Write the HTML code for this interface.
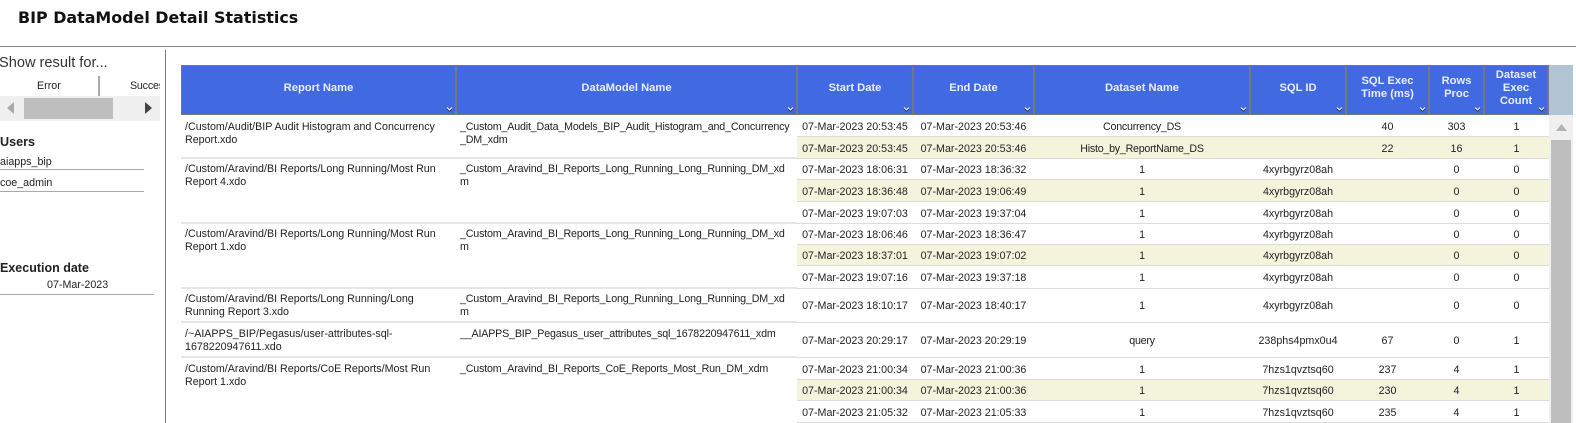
<!DOCTYPE html>
<html><head><meta charset="utf-8">
<style>
html,body{margin:0;padding:0;background:#fff}
body{width:1576px;height:423px;position:relative;overflow:hidden;font-family:"Liberation Sans",sans-serif;font-size:10.7px;color:#222}
div{position:absolute;box-sizing:border-box}
.t{white-space:nowrap}
.h{background:#4169e1;top:65px;height:50px;border:1px solid #777;border-right-width:2px;color:#e8edff;font-weight:bold;font-size:11.2px;line-height:13px;display:flex;align-items:center;justify-content:center;text-align:center;padding-bottom:4px}
.h svg{position:absolute;right:2px;bottom:2px;width:7px;height:5px}
.r{left:797px;width:752px;border-bottom:1.5px solid #dcdcdc}
.a{background:#f4f4dd}
.c{top:0;bottom:0;padding-top:3px;display:flex;align-items:center;justify-content:center;white-space:nowrap}
.c0{left:0;width:116px}.c1{left:116px;width:121px}.c2{left:237px;width:216px;letter-spacing:-.25px}.c3{left:453px;width:96px}.c4{left:549px;width:83px}.c5{left:632px;width:55px}.c6{left:687px;width:65px}
.l{white-space:nowrap;line-height:13px;color:#222}
.d{letter-spacing:-.18px}
.s{height:2px;background:#e6e6e6;left:181px;width:616px}
</style></head><body>
<div class="t" style="left:18px;top:8px;font:bold 15.9px/20px 'DejaVu Sans',sans-serif;color:#111">BIP DataModel Detail Statistics</div>
<div style="left:0;top:46px;width:1576px;height:1px;background:#888"></div>
<div style="left:165px;top:50px;width:1px;height:373px;background:#777"></div>

<div class="t" style="left:-1px;top:54px;font-size:14.6px;line-height:18px;color:#333">Show result for...</div>
<div class="t" style="left:37px;top:80px;line-height:13px">Error</div>
<div style="left:98px;top:76px;width:2px;height:20px;background:#aaa"></div>
<div class="t" style="left:130px;top:80px;width:30px;overflow:hidden;line-height:13px;letter-spacing:-.2px">Success</div>
<div style="left:0;top:96px;width:160px;height:25px;background:#f0f0f0"></div>
<div style="left:24px;top:98px;width:89px;height:21px;background:#bebebe"></div>
<svg style="position:absolute;left:7px;top:102px" width="8" height="12"><path d="M7 0V12L0 6Z" fill="#aaa"/></svg>
<svg style="position:absolute;left:145px;top:102px" width="8" height="12"><path d="M0 0V12L7 6Z" fill="#444"/></svg>
<div class="t" style="left:0;top:135px;font-weight:bold;font-size:12.6px;line-height:15px;color:#222">Users</div>
<div class="t" style="left:0;top:156px;line-height:13px">aiapps_bip</div>
<div style="left:0;top:169px;width:144px;height:1px;background:#aaa"></div>
<div class="t" style="left:0;top:177px;line-height:13px">coe_admin</div>
<div style="left:0;top:191px;width:144px;height:1px;background:#aaa"></div>
<div class="t" style="left:0;top:261px;font-weight:bold;font-size:12.5px;line-height:15px;color:#222">Execution date</div>
<div class="t" style="left:47px;top:279px;line-height:13px">07-Mar-2023</div>
<div style="left:0;top:294px;width:154px;height:1px;background:#aaa"></div>

<div class="h" style="left:181px;width:276px">Report Name<svg viewBox="0 0 7 5"><path d="M1 1.500L3.500 4L6 1.500" fill="none" stroke="#1a2550" stroke-width="1.300"/><path d="M1 .5L3.500 3L6 .5" fill="none" stroke="#fff" stroke-width="1.100"/></svg></div>
<div class="h" style="left:456px;width:342px">DataModel Name<svg viewBox="0 0 7 5"><path d="M1 1.500L3.500 4L6 1.500" fill="none" stroke="#1a2550" stroke-width="1.300"/><path d="M1 .5L3.500 3L6 .5" fill="none" stroke="#fff" stroke-width="1.100"/></svg></div>
<div class="h" style="left:797px;width:117px">Start Date<svg viewBox="0 0 7 5"><path d="M1 1.500L3.500 4L6 1.500" fill="none" stroke="#1a2550" stroke-width="1.300"/><path d="M1 .5L3.500 3L6 .5" fill="none" stroke="#fff" stroke-width="1.100"/></svg></div>
<div class="h" style="left:913px;width:122px">End Date<svg viewBox="0 0 7 5"><path d="M1 1.500L3.500 4L6 1.500" fill="none" stroke="#1a2550" stroke-width="1.300"/><path d="M1 .5L3.500 3L6 .5" fill="none" stroke="#fff" stroke-width="1.100"/></svg></div>
<div class="h" style="left:1034px;width:217px">Dataset Name<svg viewBox="0 0 7 5"><path d="M1 1.500L3.500 4L6 1.500" fill="none" stroke="#1a2550" stroke-width="1.300"/><path d="M1 .5L3.500 3L6 .5" fill="none" stroke="#fff" stroke-width="1.100"/></svg></div>
<div class="h" style="left:1250px;width:97px">SQL ID<svg viewBox="0 0 7 5"><path d="M1 1.500L3.500 4L6 1.500" fill="none" stroke="#1a2550" stroke-width="1.300"/><path d="M1 .5L3.500 3L6 .5" fill="none" stroke="#fff" stroke-width="1.100"/></svg></div>
<div class="h" style="left:1346px;width:84px">SQL Exec<br>Time (ms)<svg viewBox="0 0 7 5"><path d="M1 1.500L3.500 4L6 1.500" fill="none" stroke="#1a2550" stroke-width="1.300"/><path d="M1 .5L3.500 3L6 .5" fill="none" stroke="#fff" stroke-width="1.100"/></svg></div>
<div class="h" style="left:1429px;width:56px">Rows<br>Proc<svg viewBox="0 0 7 5"><path d="M1 1.500L3.500 4L6 1.500" fill="none" stroke="#1a2550" stroke-width="1.300"/><path d="M1 .5L3.500 3L6 .5" fill="none" stroke="#fff" stroke-width="1.100"/></svg></div>
<div class="h" style="left:1484px;width:65px">Dataset<br>Exec<br>Count<svg viewBox="0 0 7 5"><path d="M1 1.500L3.500 4L6 1.500" fill="none" stroke="#1a2550" stroke-width="1.300"/><path d="M1 .5L3.500 3L6 .5" fill="none" stroke="#fff" stroke-width="1.100"/></svg></div>

<div style="left:1549px;top:65px;width:24px;height:50px;background:#b0c4d4"></div>
<div style="left:1549px;top:115px;width:24px;height:308px;background:#f0f0f0"></div>
<div style="left:1551px;top:140px;width:20px;height:283px;background:#bebebe"></div>
<svg style="position:absolute;left:1556px;top:124px" width="12" height="8"><path d="M0 7H11L5.500 0Z" fill="#b4b4b4"/></svg>

<div class="s" style="top:157px"></div><div class="s" style="top:222px"></div><div class="s" style="top:287px"></div><div class="s" style="top:321px"></div><div class="s" style="top:356px"></div>

<div class="l" style="left:185px;top:121px">/Custom/Audit/BIP Audit Histogram and Concurrency<br>Report.xdo</div>
<div class="l d" style="left:460px;top:121px">_Custom_Audit_Data_Models_BIP_Audit_Histogram_and_Concurrency<br>_DM_xdm</div>
<div class="l" style="left:185px;top:163px">/Custom/Aravind/BI Reports/Long Running/Most Run<br>Report 4.xdo</div>
<div class="l d" style="left:460px;top:163px">_Custom_Aravind_BI_Reports_Long_Running_Long_Running_DM_xd<br>m</div>
<div class="l" style="left:185px;top:228px">/Custom/Aravind/BI Reports/Long Running/Most Run<br>Report 1.xdo</div>
<div class="l d" style="left:460px;top:228px">_Custom_Aravind_BI_Reports_Long_Running_Long_Running_DM_xd<br>m</div>
<div class="l" style="left:185px;top:293px">/Custom/Aravind/BI Reports/Long Running/Long<br>Running Report 3.xdo</div>
<div class="l d" style="left:460px;top:293px">_Custom_Aravind_BI_Reports_Long_Running_Long_Running_DM_xd<br>m</div>
<div class="l" style="left:185px;top:328px">/~AIAPPS_BIP/Pegasus/user-attributes-sql-<br>1678220947611.xdo</div>
<div class="l d" style="left:460px;top:328px">__AIAPPS_BIP_Pegasus_user_attributes_sql_1678220947611_xdm</div>
<div class="l" style="left:185px;top:363px">/Custom/Aravind/BI Reports/CoE Reports/Most Run<br>Report 1.xdo</div>
<div class="l d" style="left:460px;top:363px">_Custom_Aravind_BI_Reports_CoE_Reports_Most_Run_DM_xdm</div>

<div class="r" style="top:115px;height:22px"><div class="c c0">07-Mar-2023 20:53:45</div><div class="c c1">07-Mar-2023 20:53:46</div><div class="c c2">Concurrency_DS</div><div class="c c4">40</div><div class="c c5">303</div><div class="c c6">1</div></div>
<div class="r a" style="top:137px;height:21.500px"><div class="c c0">07-Mar-2023 20:53:45</div><div class="c c1">07-Mar-2023 20:53:46</div><div class="c c2">Histo_by_ReportName_DS</div><div class="c c4">22</div><div class="c c5">16</div><div class="c c6">1</div></div>
<div class="r" style="top:158.500px;height:21.500px"><div class="c c0">07-Mar-2023 18:06:31</div><div class="c c1">07-Mar-2023 18:36:32</div><div class="c c2">1</div><div class="c c3">4xyrbgyrz08ah</div><div class="c c5">0</div><div class="c c6">0</div></div>
<div class="r a" style="top:180px;height:21.500px"><div class="c c0">07-Mar-2023 18:36:48</div><div class="c c1">07-Mar-2023 19:06:49</div><div class="c c2">1</div><div class="c c3">4xyrbgyrz08ah</div><div class="c c5">0</div><div class="c c6">0</div></div>
<div class="r" style="top:201.500px;height:22px"><div class="c c0">07-Mar-2023 19:07:03</div><div class="c c1">07-Mar-2023 19:37:04</div><div class="c c2">1</div><div class="c c3">4xyrbgyrz08ah</div><div class="c c5">0</div><div class="c c6">0</div></div>
<div class="r" style="top:223px;height:21.500px"><div class="c c0">07-Mar-2023 18:06:46</div><div class="c c1">07-Mar-2023 18:36:47</div><div class="c c2">1</div><div class="c c3">4xyrbgyrz08ah</div><div class="c c5">0</div><div class="c c6">0</div></div>
<div class="r a" style="top:244.500px;height:21.500px"><div class="c c0">07-Mar-2023 18:37:01</div><div class="c c1">07-Mar-2023 19:07:02</div><div class="c c2">1</div><div class="c c3">4xyrbgyrz08ah</div><div class="c c5">0</div><div class="c c6">0</div></div>
<div class="r" style="top:266px;height:22.500px"><div class="c c0">07-Mar-2023 19:07:16</div><div class="c c1">07-Mar-2023 19:37:18</div><div class="c c2">1</div><div class="c c3">4xyrbgyrz08ah</div><div class="c c5">0</div><div class="c c6">0</div></div>
<div class="r" style="top:288px;height:34.500px"><div class="c c0">07-Mar-2023 18:10:17</div><div class="c c1">07-Mar-2023 18:40:17</div><div class="c c2">1</div><div class="c c3">4xyrbgyrz08ah</div><div class="c c5">0</div><div class="c c6">0</div></div>
<div class="r" style="top:322.500px;height:35px"><div class="c c0">07-Mar-2023 20:29:17</div><div class="c c1">07-Mar-2023 20:29:19</div><div class="c c2">query</div><div class="c c3">238phs4pmx0u4</div><div class="c c4">67</div><div class="c c5">0</div><div class="c c6">1</div></div>
<div class="r" style="top:357.500px;height:22px"><div class="c c0">07-Mar-2023 21:00:34</div><div class="c c1">07-Mar-2023 21:00:36</div><div class="c c2">1</div><div class="c c3">7hzs1qvztsq60</div><div class="c c4">237</div><div class="c c5">4</div><div class="c c6">1</div></div>
<div class="r a" style="top:379.500px;height:21.500px"><div class="c c0">07-Mar-2023 21:00:34</div><div class="c c1">07-Mar-2023 21:00:36</div><div class="c c2">1</div><div class="c c3">7hzs1qvztsq60</div><div class="c c4">230</div><div class="c c5">4</div><div class="c c6">1</div></div>
<div class="r" style="top:401px;height:21.500px"><div class="c c0">07-Mar-2023 21:05:32</div><div class="c c1">07-Mar-2023 21:05:33</div><div class="c c2">1</div><div class="c c3">7hzs1qvztsq60</div><div class="c c4">235</div><div class="c c5">4</div><div class="c c6">1</div></div>
</body></html>
